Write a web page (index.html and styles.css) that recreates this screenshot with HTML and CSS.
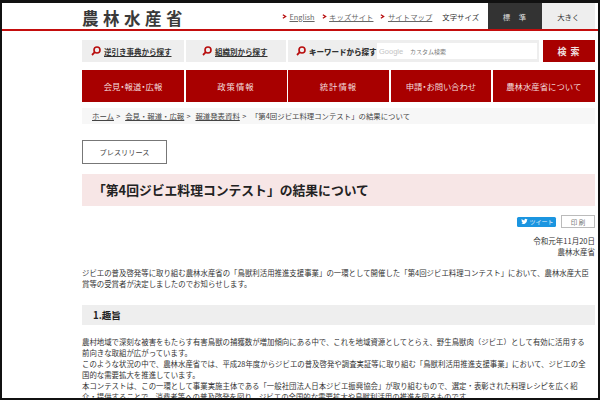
FILE: index.html
```html
<!DOCTYPE html>
<html lang="ja">
<head>
<meta charset="utf-8">
<title>「第4回ジビエ料理コンテスト」の結果について</title>
<link rel="stylesheet" href="styles.css">
</head>
<body>
<svg class="defs" width="0" height="0" aria-hidden="true">
  <symbol id="lens" viewBox="0 0 10 10"><circle cx="6" cy="4" r="3" fill="none" stroke="#b80d0d" stroke-width="1.6"/><path d="M3.800 6.200 1 9" stroke="#b80d0d" stroke-width="1.800" fill="none"/></symbol>
  <symbol id="chev" viewBox="0 0 6 6"><path d="M1 .8 4.400 3 1 5.200" fill="none" stroke="#b80d0d" stroke-width="1.500"/></symbol>
</svg>
<div class="frame">
  <header class="top">
    <div class="logo">農林水産省</div>
    <nav class="toplinks">
      <a class="toplink"><svg class="chev"><use href="#chev"/></svg><span class="u">English</span></a>
      <a class="toplink"><svg class="chev"><use href="#chev"/></svg><span class="u">キッズサイト</span></a>
      <a class="toplink"><svg class="chev"><use href="#chev"/></svg><span class="u">サイトマップ</span></a>
      <span class="fontlabel">文字サイズ</span>
    </nav>
    <div class="sizes">
      <div class="size on">標　準</div>
      <div class="size">大きく</div>
    </div>
  </header>

  <main class="wrap">
    <div class="search">
      <a class="sbox w1"><svg class="lens"><use href="#lens"/></svg><span class="u">逆引き事典から探す</span></a>
      <a class="sbox w2"><svg class="lens"><use href="#lens"/></svg><span class="u">組織別から探す</span></a>
      <div class="sbox kw">
        <svg class="lens"><use href="#lens"/></svg><b class="kwl">キーワードから探す</b>
        <div class="input"><span class="google">Google</span><span class="custom">カスタム検索</span></div>
      </div>
      <div class="go">検 索</div>
    </div>

    <nav class="gnav">
      <a class="gitem i1">会見・報道・広報</a>
      <a class="gitem i2">政策情報</a>
      <a class="gitem i3">統計情報</a>
      <a class="gitem i4">申請・お問い合わせ</a>
      <a class="gitem i5">農林水産省について</a>
    </nav>

    <div class="crumbs"><span class="u">ホーム</span> &gt;&nbsp; <span class="u">会見・報道・広報</span> &gt;&nbsp; <span class="u">報道発表資料</span> &gt;&nbsp; 「第4回ジビエ料理コンテスト」の結果について</div>

    <div class="tag">プレスリリース</div>
    <h1 class="title">「第4回ジビエ料理コンテスト」の結果について</h1>

    <div class="tools">
      <a class="tweet"><svg class="bird" viewBox="0 0 24 24"><path fill="#fff" d="M23 5c-.8.400-1.700.600-2.600.700.900-.600 1.600-1.400 2-2.500-.900.500-1.900.900-2.900 1.100A4.500 4.500 0 0 0 11.800 8.400C8 8.200 4.700 6.400 2.500 3.600c-1.200 2.100-.600 4.700 1.400 6-.700 0-1.400-.200-2-.600 0 2.200 1.500 4 3.600 4.500-.700.200-1.400.200-2 .100.600 1.800 2.200 3.100 4.200 3.100A9 9 0 0 1 1 18.600 12.800 12.800 0 0 0 20.700 7.200c.900-.600 1.700-1.400 2.300-2.200z"/></svg>ツイート</a>
      <a class="print">印 刷</a>
    </div>

    <p class="date">令和元年11月20日<br>農林水産省</p>

    <p class="text lead">ジビエの普及啓発等に取り組む農林水産省の「鳥獣利活用推進支援事業」の一環として開催した「第4回ジビエ料理コンテスト」において、農林水産大臣<br>賞等の受賞者が決定しましたのでお知らせします。</p>

    <h2 class="sec">1.趣旨</h2>

    <p class="text">農村地域で深刻な被害をもたらす有害鳥獣の捕獲数が増加傾向にある中で、これを地域資源としてとらえ、野生鳥獣肉（ジビエ）として有効に活用する<br>前向きな取組が広がっています。<br>このような状況の中で、農林水産省では、平成28年度からジビエの普及啓発や調査実証等に取り組む「鳥獣利活用推進支援事業」において、ジビエの全<br>国的な需要拡大を推進しています。<br>本コンテストは、この一環として事業実施主体である「一般社団法人日本ジビエ振興協会」が取り組むもので、選定・表彰された料理レシピを広く紹<br>介・提供することで、消費者等への普及啓発を図り、ジビエの全国的な需要拡大や鳥獣利活用の推進を図るものです。</p>
  </main>
</div>
</body>
</html>
```
FILE: styles.css
```css
* { box-sizing: border-box; }
html, body { margin: 0; padding: 0; background: #fff; }
body {
  width: 600px;
  height: 400px;
  overflow: hidden;
  font-family: "Noto Sans CJK JP", "Liberation Sans", sans-serif;
  color: #333;
}
.defs { position: absolute; }
.frame {
  width: 600px;
  height: 400px;
  overflow: hidden;
  border: 2px solid #111;
  border-top-width: 3px;
}
.u { text-decoration: underline; text-underline-offset: 1px; text-decoration-thickness: 1px; }

.top {
  height: 28px;
  display: flex;
  align-items: stretch;
  padding-left: 80px;
  padding-right: 3px;
  border-bottom: 2px solid #c40d0d;
}
.logo {
  font-size: 16.5px;
  line-height: 26px;
  padding-top: 2px;
  letter-spacing: 4.5px;
  font-weight: 700;
  color: #3a3a3a;
  width: 200px;
  white-space: nowrap;
}
.toplinks {
  display: flex;
  align-items: center;
  font-size: 7.4px;
  color: #666;
  height: 26px;
  width: 206px;
  white-space: nowrap;
}
.toplink { display: flex; align-items: center; margin-right: 7px; }
.chev { width: 5px; height: 5px; margin-right: 2.5px; }
.fontlabel { color: #333; margin-left: 3px; }
.sizes { display: flex; height: 26px; }
.size {
  width: 53.5px;
  background: #eee;
  font-size: 7.4px;
  display: flex;
  align-items: center;
  justify-content: center;
  color: #333;
}
.size.on { background: #333; color: #ddd; letter-spacing: .6px; }

.wrap { padding: 9px 3px 0 80px; }

.search { display: flex; height: 22px; }
.sbox {
  background: #eee;
  display: flex;
  align-items: center;
  font-size: 7.5px;
  font-weight: 700;
  color: #333;
  white-space: nowrap;
}
.w1 { width: 102px; margin-right: 2px; padding-left: 9px; }
.w2 { width: 100px; margin-right: 2px; padding-left: 16px; }
.kw { width: 251px; margin-right: 2px; padding: 3px 2px 3px 8px; }
.lens { width: 10px; height: 10px; margin-right: 3px; flex: none; }
.kwl { width: 68px; flex: none; }
.input {
  background: #fff;
  flex: 1;
  height: 100%;
  display: flex;
  align-items: center;
  font-weight: 400;
  font-size: 6px;
  color: #999;
  padding-left: 2px;
}
.google { font-family: "Liberation Sans", sans-serif; font-size: 7.5px; color: #c4c4c4; width: 31px; }
.custom { color: #777; }
.go {
  flex: 1;
  margin-left: 2px;
  background: #a80000;
  color: #f0e0e0;
  font-size: 9px;
  font-weight: 700;
  letter-spacing: 1px;
  display: flex;
  align-items: center;
  justify-content: center;
}

.gnav { display: flex; gap: 1.5px; height: 32px; margin-top: 8px; }
.gitem {
  background: #a80000;
  color: #f3dcdc;
  font-size: 8.4px;
  display: flex;
  align-items: center;
  justify-content: center;
  white-space: nowrap;
}
.i1 { width: 102px; font-feature-settings: "palt"; }
.i2 { width: 101px; letter-spacing: 1px; }
.i3 { width: 101px; letter-spacing: 1px; }
.i4 { width: 100.5px; font-feature-settings: "palt"; }
.i5 { flex: 1; }

.crumbs {
  margin-top: 6px;
  height: 16px;
  background: #f7f7f7;
  padding-left: 10px;
  font-size: 7.4px;
  line-height: 16px;
  word-spacing: .7px;
  color: #444;
  white-space: nowrap;
}

.tag {
  margin-top: 16px;
  width: 85px;
  height: 24px;
  border: 1px solid #777;
  font-size: 7.2px;
  display: flex;
  align-items: center;
  justify-content: center;
  color: #444;
}
.title {
  margin: 10px 0 0;
  height: 32px;
  background: #f7e6e6;
  padding-left: 11px;
  font-size: 12.8px;
  line-height: 32px;
  font-weight: 700;
  color: #222;
  white-space: nowrap;
}
.tools {
  display: flex;
  justify-content: flex-end;
  align-items: center;
  gap: 5.5px;
  margin-top: 9px;
  height: 13px;
}
.tweet {
  width: 39px;
  height: 10px;
  background: #1b95e0;
  border-radius: 1.5px;
  color: #e4f2fc;
  font-size: 6px;
  display: flex;
  align-items: center;
  padding-left: 4px;
  white-space: nowrap;
}
.bird { width: 7px; height: 7px; margin-right: 2px; }
.print {
  width: 34px;
  height: 13px;
  border: 1px solid #bbb;
  font-size: 6.5px;
  color: #777;
  display: flex;
  align-items: center;
  justify-content: center;
}
.date {
  margin: 7px 0 0;
  text-align: right;
  font-size: 7.5px;
  line-height: 11px;
  color: #333;
}
.text {
  margin: 0;
  font-size: 7.42px;
  line-height: 11px;
  color: #333;
  white-space: nowrap;
}
.lead { margin-top: 10px; }
.sec {
  margin: 16px 0 11px;
  height: 20px;
  background: #eee;
  padding-left: 11px;
  font-size: 9.6px;
  line-height: 20px;
  font-weight: 700;
  color: #222;
}
```
